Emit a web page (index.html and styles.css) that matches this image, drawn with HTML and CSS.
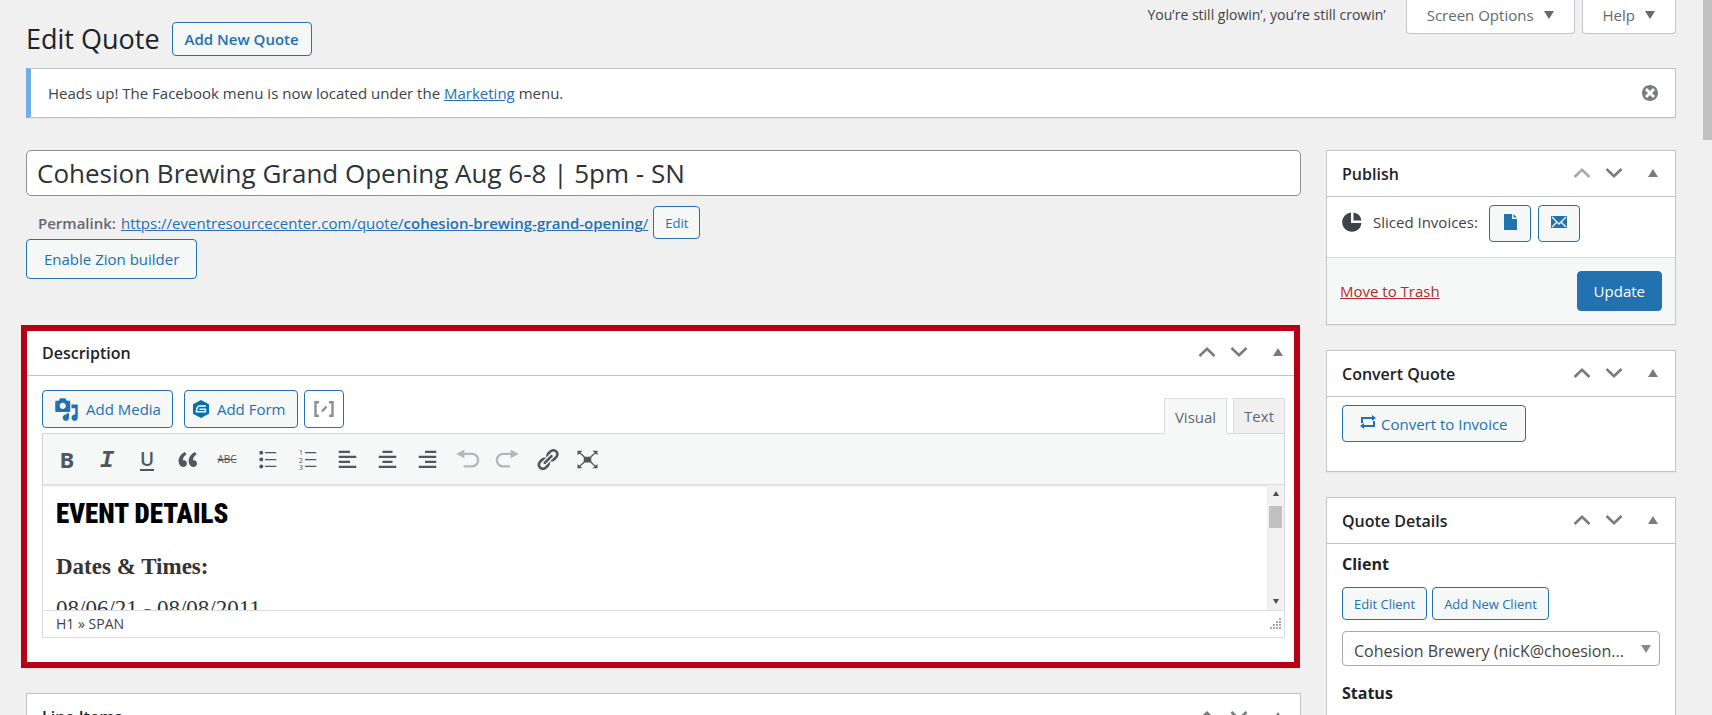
FILE: index.html
```html
<!DOCTYPE html>
<html lang="en">
  <head>
    <meta charset="UTF-8" />
    <meta name="viewport" content="width=device-width, initial-scale=1.0" />
    <title>Edit Quote</title>
    <link rel="stylesheet" href="styles.css">
  </head>

  <body>
    <!-- shared icons -->
    <svg class="sprite" aria-hidden="true">
      <symbol id="chev-up" viewBox="0 0 20 12"><path d="M2.5 10 10 2.8 17.500 10" fill="none" stroke="currentColor" stroke-width="2.600" /></symbol>
      <symbol id="chev-down" viewBox="0 0 20 12"><path d="M2.500 2 10 9.200 17.500 2" fill="none" stroke="currentColor" stroke-width="2.600" /></symbol>
      <symbol id="tri-up" viewBox="0 0 10 8"><path d="M5 0 10 8H0z" /></symbol>
      <symbol id="tri-down" viewBox="0 0 10 8"><path d="M0 0h10L5 8z" /></symbol>
    </svg>

    <div class="wrap">
      <header class="page-head">
        <div class="page-title">
          <h1>Edit Quote</h1>
          <a class="button title-action" href="#">Add New Quote</a>
        </div>
        <div class="screen-meta">
          <p class="lyric">You’re still glowin’, you’re still crowin’</p>
          <button class="meta-tab" type="button">Screen Options <svg class="tri"><use href="#tri-down" /></svg></button>
          <button class="meta-tab" type="button">Help <svg class="tri"><use href="#tri-down" /></svg></button>
        </div>
      </header>

      <div class="notice">
        <p>Heads up! The Facebook menu is now located under the <a href="#">Marketing</a> menu.</p>
        <button class="dismiss" type="button" aria-label="Dismiss this notice">
          <svg viewBox="0 0 20 20"><path d="M10 2c4.420 0 8 3.580 8 8s-3.580 8-8 8-8-3.580-8-8 3.580-8 8-8zm5 11l-3-3 3-3-2-2-3 3-3-3-2 2 3 3-3 3 2 2 3-3 3 3z" /></svg>
        </button>
      </div>

      <div class="columns">
        <main class="main-col">
          <input class="post-title" type="text" aria-label="Title" value="Cohesion Brewing Grand Opening Aug 6-8 | 5pm - SN" />
          <div class="permalink">
            <b>Permalink:</b>
            <a href="#">https://eventresourcecenter.com/quote/<b>cohesion-brewing-grand-opening</b>/</a>
            <button class="button small" type="button">Edit</button>
          </div>
          <button class="button zion" type="button">Enable Zion builder</button>

          <section class="postbox highlighted">
            <div class="postbox-head">
              <h2>Description</h2>
              <div class="handles">
                <button type="button" aria-label="Move up"><svg class="chev"><use href="#chev-up" /></svg></button>
                <button type="button" aria-label="Move down"><svg class="chev"><use href="#chev-down" /></svg></button>
                <button class="toggle" type="button" aria-label="Toggle panel"><svg class="tri"><use href="#tri-up" /></svg></button>
              </div>
            </div>

            <div class="editor">
              <div class="editor-tools">
                <div class="media-buttons">
                  <button class="button media" type="button">
                    <svg class="icon" viewBox="0 0 20 20"><path d="M13 11V4c0-.55-.45-1-1-1h-1.670L9 1H5L3.670 3H2c-.55 0-1 .45-1 1v7c0 .55.45 1 1 1h10c.55 0 1-.45 1-1zM7 4.500c1.380 0 2.500 1.120 2.500 2.500S8.380 9.500 7 9.500 4.500 8.380 4.500 7 5.620 4.500 7 4.500zM14 6h5v10.500c0 1.380-1.120 2.500-2.500 2.500S14 17.880 14 16.500s1.120-2.500 2.500-2.500c.17 0 .34.02.5.05V9h-3V6zm-4 8.050V13h2v3.500c0 1.380-1.120 2.500-2.500 2.500S7 17.880 7 16.500 8.120 14 9.500 14c.17 0 .34.02.5.05z" /></svg>
                    Add Media
                  </button>
                  <button class="button form" type="button">
                    <svg class="hex" viewBox="0 0 16 18"><path d="M8 0l8 4.200v9.600L8 18l-8-4.200V4.200z" /><path d="M13 6H6.500C4.800 6 3.700 7.500 3.400 11.800h9V9.200H6.500" fill="none" stroke="#fff" stroke-width="1.600" /></svg>
                    Add Form
                  </button>
                  <button class="button shortcode" type="button" aria-label="Insert shortcode">
                    <svg viewBox="0 0 20 16"><path d="M5 1.200H1.500v13.600H5M15 1.200h3.500v13.600H15M8 10.500l4.500-5" fill="none" stroke="currentColor" stroke-width="2.400" /></svg>
                  </button>
                </div>
                <div class="editor-tabs">
                  <button class="tab active" type="button">Visual</button>
                  <button class="tab" type="button">Text</button>
                </div>
              </div>

              <div class="editor-frame">
                <div class="toolbar">
                  <button type="button" class="bold">B</button>
                  <button type="button" class="italic">I</button>
                  <button type="button" class="underline">U</button>
                  <button type="button" aria-label="Blockquote"><svg viewBox="0 0 20 20"><path d="M9.490 13.220c0-.74-.2-1.380-.61-1.900-.62-.78-1.830-.88-2.530-.72-.29-1.650 1.110-3.750 2.920-4.650L7.880 4c-2.730 1.300-5.420 4.280-4.960 8.050C3.210 14.430 4.590 16 6.540 16c.85 0 1.560-.25 2.120-.75s.83-1.180.83-2.030zm8.050 0c0-.74-.2-1.380-.61-1.900-.63-.78-1.830-.88-2.530-.72-.29-1.650 1.110-3.750 2.920-4.650L15.930 4c-2.730 1.300-5.410 4.280-4.950 8.050.29 2.380 1.660 3.950 3.610 3.950.85 0 1.560-.25 2.120-.75s.83-1.180.83-2.030z" /></svg></button>
                  <button type="button" class="strike">ABC</button>
                  <button type="button" aria-label="Bulleted list"><svg viewBox="0 0 20 20"><circle cx="5" cy="4.500" r="1.600" /><circle cx="5" cy="10" r="1.600" /><circle cx="5" cy="15.500" r="1.600" /><path d="M8 4h9v1H8zM8 9.500h9v1H8zM8 15h9v1H8z" /></svg></button>
                  <button type="button" aria-label="Numbered list"><svg viewBox="0 0 20 20"><text x="3" y="6.500">1</text><text x="3" y="12.500">2</text><text x="3" y="18.500">3</text><path d="M8 4h9v1H8zM8 9.500h9v1H8zM8 15h9v1H8z" /></svg></button>
                  <button type="button" aria-label="Align left"><svg viewBox="0 0 20 20"><path d="M3 3h9v1.800H3zM3 7h14v1.800H3zM3 11h9v1.800H3zM3 15h14v1.800H3z" /></svg></button>
                  <button type="button" aria-label="Align center"><svg viewBox="0 0 20 20"><path d="M6 3h8v1.800H6zM3 7h14v1.800H3zM6 11h8v1.800H6zM3 15h14v1.800H3z" /></svg></button>
                  <button type="button" aria-label="Align right"><svg viewBox="0 0 20 20"><path d="M8 3h9v1.800H8zM3 7h14v1.800H3zM8 11h9v1.800H8zM3 15h14v1.800H3z" /></svg></button>
                  <button type="button" class="off" aria-label="Undo"><svg viewBox="0 0 20 20"><path d="M7.500 2v7L1 5.500z" /><path d="M7 5.500h6.500a5 5 0 0 1 0 10H7" fill="none" stroke="currentColor" stroke-width="1.900" /></svg></button>
                  <button type="button" class="off" aria-label="Redo"><svg viewBox="0 0 20 20"><path d="M12.500 2v7L19 5.500z" /><path d="M13 5.500H6.500a5 5 0 0 0 0 10H12" fill="none" stroke="currentColor" stroke-width="1.900" /></svg></button>
                  <button type="button" aria-label="Insert link"><svg viewBox="0 0 20 20"><path d="M17.740 2.760c1.680 1.690 1.680 4.410 0 6.100l-1.530 1.520c-1.120 1.120-2.700 1.470-4.140 1.090l2.620-2.610.76-.77.76-.76c.84-.84.84-2.200 0-3.040-.84-.85-2.200-.85-3.040 0l-.77.76-3.380 3.380c-.37-1.440-.02-3.020 1.100-4.140l1.520-1.530c1.690-1.680 4.420-1.680 6.100 0zM8.590 13.430l5.340-5.340c.42-.42.42-1.100 0-1.520-.44-.43-1.130-.39-1.530 0l-5.330 5.340c-.42.42-.42 1.100 0 1.520.44.43 1.130.39 1.520 0zm-.76 2.290l4.140-4.150c.38 1.440.03 3.020-1.090 4.140l-1.520 1.530c-1.690 1.680-4.410 1.680-6.100 0-1.680-1.680-1.680-4.420 0-6.100l1.530-1.520c1.120-1.120 2.700-1.470 4.140-1.100l-4.140 4.150c-.85.84-.85 2.200 0 3.050.84.84 2.200.84 3.040 0z" /></svg></button>
                  <button type="button" aria-label="Fullscreen"><svg viewBox="0 0 20 20"><path d="M7 7.700h6v4.600H7zM2 3h4L2 6.500zM18 3h-4l4 3.500zM2 17h4l-4-3.500zM18 17h-4l4-3.500z" /><path d="M3 4l4.500 4M17 4l-4.500 4M3 16l4.500-4M17 16l-4.500-4" stroke="currentColor" stroke-width="1" /></svg></button>
                </div>

                <div class="edit-area">
                  <div class="content" contenteditable="true" spellcheck="false">
                    <h1>EVENT DETAILS</h1>
                    <h3>Dates &amp; Times:</h3>
                    <p>08/06/21 - 08/08/2011</p>
                  </div>
                  <div class="scroll">
                    <svg class="arrow"><use href="#tri-up" /></svg>
                    <div class="thumb"></div>
                    <svg class="arrow"><use href="#tri-down" /></svg>
                  </div>
                </div>

                <div class="statusbar">
                  <span>H1 » SPAN</span>
                  <svg class="grip" viewBox="0 0 12 12"><path d="M10 0h2v2h-2zM7 3h2v2H7zM10 3h2v2h-2zM4 6h2v2H4zM7 6h2v2H7zM10 6h2v2h-2zM1 9h2v2H1zM4 9h2v2H4zM7 9h2v2H7zM10 9h2v2h-2z" /></svg>
                </div>
              </div>
            </div>
          </section>

          <section class="postbox">
            <div class="postbox-head">
              <h2>Line Items</h2>
              <div class="handles">
                <button type="button" aria-label="Move up"><svg class="chev"><use href="#chev-up" /></svg></button>
                <button type="button" aria-label="Move down"><svg class="chev"><use href="#chev-down" /></svg></button>
                <button class="toggle" type="button" aria-label="Toggle panel"><svg class="tri"><use href="#tri-up" /></svg></button>
              </div>
            </div>
          </section>
        </main>

        <aside class="side-col">
          <section class="postbox">
            <div class="postbox-head">
              <h2>Publish</h2>
              <div class="handles">
                <button type="button" disabled aria-label="Move up"><svg class="chev"><use href="#chev-up" /></svg></button>
                <button type="button" aria-label="Move down"><svg class="chev"><use href="#chev-down" /></svg></button>
                <button class="toggle" type="button" aria-label="Toggle panel"><svg class="tri"><use href="#tri-up" /></svg></button>
              </div>
            </div>
            <div class="sliced">
              <svg class="pie" viewBox="0 0 20 20"><path d="M9 0.500V11h10.500A9.700 9.700 0 1 1 9 .5z" /><path d="M11.500 0.500A9.500 9.500 0 0 1 19.500 8.500h-8z" /></svg>
              <span>Sliced Invoices:</span>
              <button class="button square" type="button" aria-label="View"><svg viewBox="0 0 20 20"><path d="M4 2h8v5h5v11H4zM13.500 2 17 5.500h-3.500z" /></svg></button>
              <button class="button square" type="button" aria-label="Email"><svg viewBox="0 0 20 20"><path d="M2 4h16v12H2z" /><path d="M3 5l7 7 7-7M3 15l5-5M17 15l-5-5" fill="none" stroke="#f6f7f7" stroke-width="1.300" /></svg></button>
            </div>
            <div class="publish-actions">
              <a class="trash" href="#">Move to Trash</a>
              <button class="button primary" type="button">Update</button>
            </div>
          </section>

          <section class="postbox">
            <div class="postbox-head">
              <h2>Convert Quote</h2>
              <div class="handles">
                <button type="button" aria-label="Move up"><svg class="chev"><use href="#chev-up" /></svg></button>
                <button type="button" aria-label="Move down"><svg class="chev"><use href="#chev-down" /></svg></button>
                <button class="toggle" type="button" aria-label="Toggle panel"><svg class="tri"><use href="#tri-up" /></svg></button>
              </div>
            </div>
            <div class="convert">
              <button class="button" type="button">
                <svg class="repeat" viewBox="0 0 16 14"><path d="M2 8V3H12M14 6v5H4" fill="none" stroke="currentColor" stroke-width="2" /><path d="M12 0 16 3l-4 3zM4 8 0 11l4 3z" /></svg>
                Convert to Invoice
              </button>
            </div>
          </section>

          <section class="postbox">
            <div class="postbox-head">
              <h2>Quote Details</h2>
              <div class="handles">
                <button type="button" aria-label="Move up"><svg class="chev"><use href="#chev-up" /></svg></button>
                <button type="button" aria-label="Move down"><svg class="chev"><use href="#chev-down" /></svg></button>
                <button class="toggle" type="button" aria-label="Toggle panel"><svg class="tri"><use href="#tri-up" /></svg></button>
              </div>
            </div>
            <div class="details">
              <label for="client">Client</label>
              <div class="client-buttons">
                <button class="button small" type="button">Edit Client</button>
                <button class="button small" type="button">Add New Client</button>
              </div>
              <div class="select-wrap">
                <select id="client">
                  <option>Cohesion Brewery (nicK@choesion...</option>
                </select>
                <svg class="tri"><use href="#tri-down" /></svg>
              </div>
              <label for="status">Status</label>
              <select id="status"></select>
            </div>
          </section>
        </aside>
      </div>
    </div>
    <div class="page-scroll"></div>
  </body>
</html>
```
FILE: styles.css
```css
* {
  box-sizing: border-box;
}

html {
  overflow: hidden;
}

body {
  margin: 0;
  height: 100vh;
  overflow: hidden;
  background: #f0f0f0;
  color: #3c434a;
  font-family: "Open Sans", "Noto Sans", sans-serif;
  font-size: 15px;
  line-height: 20px;
}

h1,
h2,
p {
  margin: 0;
}

a {
  color: #2271b1;
}

button,
input,
select {
  font: inherit;
  color: inherit;
}

button {
  cursor: pointer;
}

svg {
  fill: currentColor;
  flex-shrink: 0;
}

.sprite {
  display: none;
}

.tri {
  width: 10px;
  height: 8px;
}

.chev {
  width: 20px;
  height: 12px;
}

.wrap {
  padding: 0 36px 0 26px;
}

/* Buttons */
.button {
  display: inline-flex;
  align-items: center;
  justify-content: center;
  padding: 0 17px;
  color: #2271b1;
  background: #f6f7f7;
  border: 1px solid #2271b1;
  border-radius: 4px;
  text-decoration: none;
  white-space: nowrap;
}

.button.small {
  height: 33px;
  padding: 0 11px;
  font-size: 13px;
}

.button.primary {
  height: 40px;
  padding: 0 16px;
  background: #2271b1;
  color: #fff;
}

/* Top of the page */
.page-head {
  display: flex;
  justify-content: space-between;
  height: 68px;
}

.page-title {
  display: flex;
  align-items: center;
  gap: 12px;
  height: 34px;
  margin-top: 22px;
}

.page-title h1 {
  color: #1d2327;
  font-size: 27px;
  font-weight: 400;
  line-height: 34px;
}

.title-action {
  height: 34px;
  padding: 0 12px;
  font-weight: 600;
}

.screen-meta {
  display: flex;
  gap: 7px;
  height: 34px;
}

.lyric {
  margin-right: 13px;
  font-size: 14px;
  line-height: 30px;
}

.meta-tab {
  display: flex;
  align-items: center;
  gap: 10px;
  padding: 0 20px 4px;
  background: #fff;
  color: #646970;
  border: 1px solid #c3c4c7;
  border-top: none;
  border-radius: 0 0 4px 4px;
}

.notice {
  display: flex;
  align-items: center;
  justify-content: space-between;
  height: 50px;
  padding: 0 15px 0 17px;
  background: #fff;
  border: 1px solid #c3c4c7;
  border-left: 5px solid #72aee6;
  box-shadow: 0 1px 1px rgba(0, 0, 0, 0.04);
}

.dismiss {
  width: 20px;
  height: 20px;
  padding: 0;
  border: none;
  background: none;
  color: #787c82;
}

.dismiss svg {
  display: block;
}

.columns {
  display: grid;
  grid-template-columns: minmax(0, 1fr) 350px;
  gap: 25px;
  margin-top: 32px;
}

/* Title and permalink */
.post-title {
  display: block;
  width: 100%;
  height: 46px;
  padding: 0 10px;
  color: #2c3338;
  background: #fff;
  border: 1px solid #8c8f94;
  border-radius: 5px;
  font-size: 26px;
}

.permalink {
  display: flex;
  align-items: center;
  gap: 5px;
  margin-top: 10px;
  padding-left: 12px;
}

.permalink b {
  font-weight: 600;
}

.permalink > b {
  color: #646970;
}

.zion {
  height: 40px;
}

/* Panels */
.postbox {
  margin-bottom: 25px;
  background: #fff;
  border: 1px solid #c3c4c7;
  box-shadow: 0 1px 1px rgba(0, 0, 0, 0.04);
}

.postbox.highlighted {
  margin: 46px 1px 25px -5px;
  border: 6px solid #b50015;
}

.postbox-head {
  display: flex;
  align-items: center;
  justify-content: space-between;
  height: 46px;
  padding: 0 17px 0 15px;
  border-bottom: 1px solid #c3c4c7;
}

.highlighted .postbox-head {
  height: 45px;
  padding-right: 11px;
}

.postbox-head h2 {
  color: #1d2327;
  font-size: 16px;
  font-weight: 600;
}

.handles {
  display: flex;
  align-items: center;
  gap: 12px;
  padding-bottom: 2px;
}

.handles button {
  display: flex;
  padding: 0;
  border: none;
  background: none;
  color: #787c82;
}

.handles button:disabled {
  color: #a7aaad;
}

.handles .toggle {
  margin-left: 12px;
}

/* Editor */
.editor {
  padding: 14px 9px 24px 15px;
}

.editor-tools {
  display: flex;
  justify-content: space-between;
}

.media-buttons {
  display: flex;
  height: 38px;
  margin-bottom: 5px;
}

.media {
  gap: 7px;
  padding: 0 11px;
  margin-right: 11px;
}

.icon {
  width: 25px;
  height: 25px;
}

.form {
  gap: 8px;
  padding: 0 12px 0 8px;
  margin-right: 6px;
}

.hex {
  width: 16px;
  height: 18px;
  color: #0073aa;
}

.shortcode {
  width: 40px;
  padding: 0;
  background: #fff;
  color: #8c8f94;
}

.shortcode svg {
  width: 20px;
  height: 16px;
}

.editor-tabs {
  display: flex;
  align-items: flex-end;
  gap: 6px;
}

.tab {
  height: 35px;
  padding: 0 10px;
  background: #f0f0f0;
  color: #646970;
  border: 1px solid #dcdcde;
  border-bottom: none;
}

/* the active tab covers the top line of the frame */
.tab.active {
  position: relative;
  height: 36px;
  margin-bottom: -1px;
  background: #f6f7f7;
}

.editor-frame {
  border: 1px solid #dcdcde;
}

.toolbar {
  display: flex;
  align-items: center;
  gap: 10px;
  height: 51px;
  padding-left: 9px;
  background: #f6f7f7;
  color: #50575e;
  border-bottom: 1px solid #dcdcde;
  box-shadow: 0 1px 2px rgba(0, 0, 0, 0.15);
}

.toolbar button {
  display: flex;
  align-items: center;
  justify-content: center;
  width: 30px;
  height: 30px;
  padding: 0;
  border: none;
  background: none;
}

.toolbar svg {
  width: 25px;
  height: 25px;
}

.toolbar text {
  font-size: 6px;
}

.toolbar .bold {
  font-size: 22px;
  font-weight: 700;
}

.toolbar .italic {
  padding-top: 4px;
  font-family: "Liberation Mono", monospace;
  font-size: 24px;
  font-style: italic;
  font-weight: 700;
}

.toolbar .underline {
  font-size: 19px;
  font-weight: 600;
  text-decoration: underline 2px;
  text-underline-offset: 3px;
}

.toolbar .strike {
  font-size: 10px;
  text-decoration: line-through;
}

.toolbar .off {
  color: #b5b8bb;
}

.edit-area {
  display: flex;
  height: 125px;
}

.content {
  flex: 1;
  padding: 12px 13px 0;
  overflow: hidden;
  color: #333;
  font-family: Georgia, "Liberation Serif", serif;
  font-size: 23px;
  outline: none;
}

.content h1 {
  color: #000;
  font-family: Impact, "Roboto Condensed", Roboto, sans-serif;
  font-size: 27px;
  font-weight: 900;
  line-height: 34px;
}

.content h3 {
  margin: 22px 0 0;
  font-size: 23px;
  line-height: 28px;
}

.content p {
  margin-top: 14px;
  line-height: 28px;
}

.scroll {
  display: flex;
  flex-direction: column;
  align-items: center;
  width: 17px;
  padding: 6px 0;
  background: #f1f1f1;
  color: #505050;
}

.arrow {
  width: 8px;
  height: 5px;
}

.thumb {
  width: 13px;
  height: 22px;
  margin: 10px 0 auto;
  background: #c1c1c1;
}

.statusbar {
  display: flex;
  align-items: center;
  justify-content: space-between;
  height: 27px;
  padding: 0 3px 0 13px;
  border-top: 1px solid #dcdcde;
  font-size: 14px;
}

.grip {
  width: 12px;
  height: 12px;
  color: #a7aaad;
}

/* Sidebar */
.sliced {
  display: flex;
  align-items: flex-start;
  gap: 7px;
  height: 60px;
  padding: 8px 15px 0;
}

.sliced span {
  margin: 0 4px;
  line-height: 34px;
}

.pie {
  width: 20px;
  height: 20px;
  margin-top: 7px;
}

.square {
  width: 42px;
  height: 37px;
  padding: 0 0 3px;
}

.square svg {
  width: 20px;
  height: 20px;
}

.publish-actions {
  display: flex;
  align-items: center;
  justify-content: space-between;
  padding: 13px;
  background: #f6f7f7;
  border-top: 1px solid #dcdcde;
}

.trash {
  color: #b32d2e;
}

.convert {
  padding: 8px 15px 29px;
}

.convert .button {
  height: 37px;
  gap: 5px;
}

.repeat {
  width: 16px;
  height: 14px;
  margin-bottom: 4px;
}

.details {
  padding: 10px 15px 30px;
}

.details label {
  display: block;
  margin-bottom: 13px;
  color: #1d2327;
  font-size: 16px;
  font-weight: 700;
}

.client-buttons {
  display: flex;
  gap: 5px;
  margin-bottom: 11px;
}

.select-wrap {
  position: relative;
  margin-bottom: 17px;
}

.select-wrap .tri {
  position: absolute;
  top: 14px;
  right: 9px;
  color: #888;
  pointer-events: none;
}

select {
  appearance: none;
  display: block;
  width: 100%;
  height: 35px;
  padding: 4px 25px 0 11px;
  background: #fff;
  color: #444;
  border: 1px solid #aaa;
  border-radius: 4px;
  font-size: 16px;
}

.page-scroll {
  position: fixed;
  top: 0;
  right: 0;
  width: 9px;
  height: 140px;
  background: #c1c1c1;
}
```
